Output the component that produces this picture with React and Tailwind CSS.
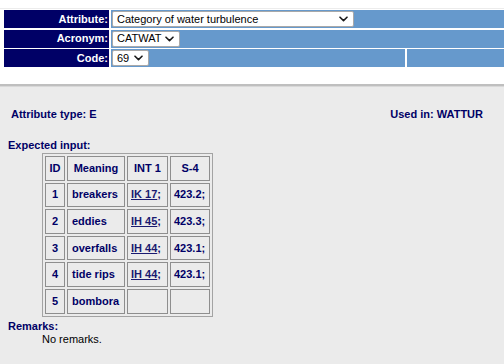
import React from "react";

const Chevron = () => (
  <svg width="9" height="6" viewBox="0 0 9 6" className="shrink-0">
    <path d="M1 1.2L4.5 4.6L8 1.2" fill="none" stroke="#1a1a1a" strokeWidth="1.6" strokeLinecap="round" strokeLinejoin="round" />
  </svg>
);

const FakeSelect = ({ text, w }) => (
  <div
    className={`h-[16px] ${w} bg-white border border-[#a9a9a9] rounded-[2px] flex items-center justify-between pl-[4px] pr-[5px] text-[11px] text-black leading-none`}
  >
    <span>{text}</span>
    <Chevron />
  </div>
);

const Label = ({ children }) => (
  <div className="w-[105px] shrink-0 bg-[#000066] text-white font-bold text-[11px] flex items-center justify-end pr-[1px] leading-none">
    {children}
  </div>
);

const rows = [
  { id: "1", m: "breakers", int1: "IK 17", s4: "423.2;" },
  { id: "2", m: "eddies", int1: "IH 45", s4: "423.3;" },
  { id: "3", m: "overfalls", int1: "IH 44", s4: "423.1;" },
  { id: "4", m: "tide rips", int1: "IH 44", s4: "423.1;" },
  { id: "5", m: "bombora", int1: null, s4: "" },
];

export default function App() {
  const cell = "border border-[#8e8e8e] h-[24.6px] p-0 text-[11px] font-bold text-[#000066] align-middle leading-[13px]";
  return (
    <div
      className="w-[504px] h-[364px] overflow-hidden bg-[#ebebeb]"
      style={{ fontFamily: '"Liberation Sans", Arial, Helvetica, sans-serif' }}
    >
      {/* top frame */}
      <div className="bg-white h-[84px] flex flex-col">
        <div className="h-[8px]" />
        <div className="h-[1px] bg-[#ececec]" />
        <div className="h-[1px]" />
        <div className="flex flex-col gap-[1.5px] pl-[4px]">
          <div className="flex h-[18px] gap-[2px]">
            <Label>Attribute:</Label>
            <div className="flex-1 bg-[#6699cc] flex items-center pl-[1px]">
              <FakeSelect text="Category of water turbulence" w="w-[242px]" />
            </div>
          </div>
          <div className="flex h-[18px] gap-[2px]">
            <Label>Acronym:</Label>
            <div className="flex-1 bg-[#6699cc] flex items-center pl-[1px]">
              <FakeSelect text="CATWAT" w="w-[68px]" />
            </div>
          </div>
          <div className="flex h-[18px] gap-[2px]">
            <Label>Code:</Label>
            <div className="w-[294px] bg-[#6699cc] flex items-center pl-[1px]">
              <FakeSelect text="69" w="w-[37px]" />
            </div>
            <div className="flex-1 bg-[#6699cc]" />
          </div>
        </div>
      </div>
      <div className="h-[2px] bg-[#bfbfbf]" />
      <div className="h-[1px] bg-[#d8d8d8]" />

      {/* bottom frame */}
      <div className="text-[11px] leading-[13px] text-[#000066]">
        <div className="flex justify-between pl-[11px] pr-[21px] pt-[21px] font-bold">
          <span>Attribute type: E</span>
          <span>Used in: WATTUR</span>
        </div>
        <div className="pl-[8px] mt-[18px] font-bold">Expected input:</div>
        <table className="ml-[42px] mt-[1px] table-fixed w-[171px] border-separate border-spacing-[2px] border border-[#a3a3a3]">
          <colgroup>
            <col className="w-[20px]" />
            <col className="w-[58px]" />
            <col className="w-[41px]" />
            <col className="w-[40px]" />
          </colgroup>
          <thead>
            <tr>
              <th className={`${cell} text-center`}>ID</th>
              <th className={`${cell} text-center`}>Meaning</th>
              <th className={`${cell} text-center`}>INT 1</th>
              <th className={`${cell} text-center`}>S-4</th>
            </tr>
          </thead>
          <tbody>
            {rows.map((r) => (
              <tr key={r.id}>
                <td className={`${cell} text-center`}>{r.id}</td>
                <td className={`${cell} text-left pl-[4px] whitespace-nowrap`}>{r.m}</td>
                <td className={`${cell} text-left pl-[3px] whitespace-nowrap`}>
                  {r.int1 ? (
                    <>
                      <a className="underline decoration-1 underline-offset-[1px] text-[#1a1a70]">{r.int1}</a>
                      <span>;</span>
                    </>
                  ) : null}
                </td>
                <td className={`${cell} text-left pl-[3px] whitespace-nowrap`}>{r.s4}</td>
              </tr>
            ))}
          </tbody>
        </table>
        <div className="pl-[8px] mt-[3px] font-bold">Remarks:</div>
        <div className="pl-[42px] text-black">No remarks.</div>
      </div>
    </div>
  );
}
